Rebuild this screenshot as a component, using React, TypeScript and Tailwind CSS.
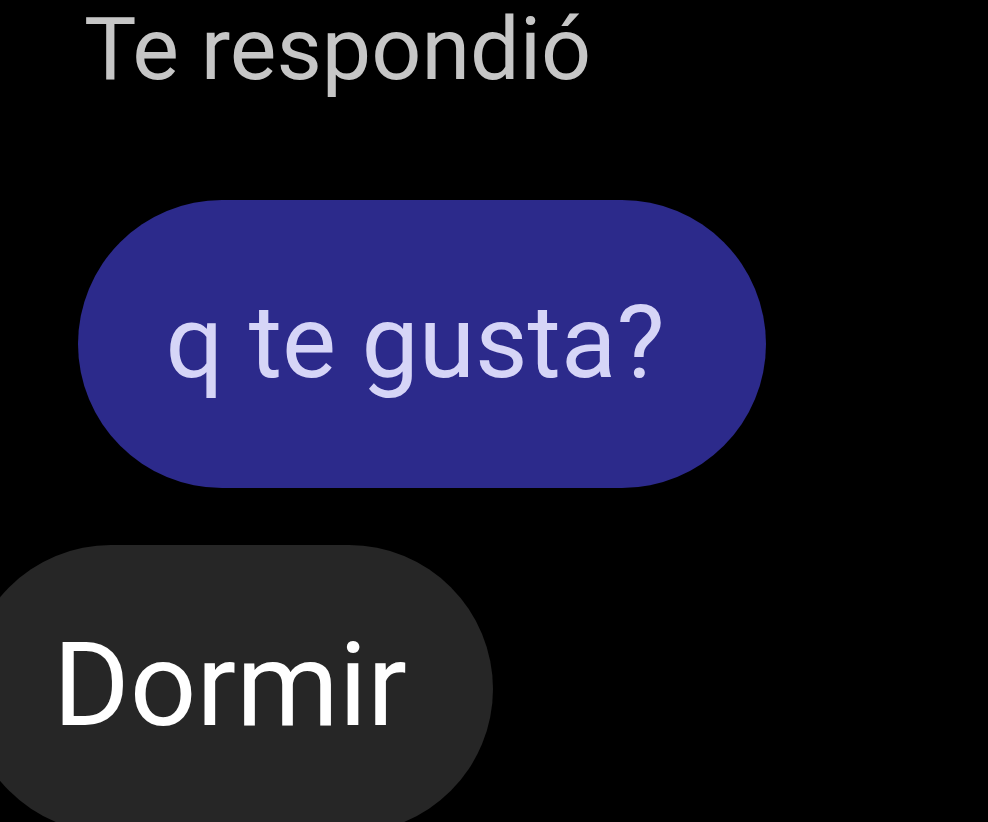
export default function App() {
  return (
    <div
      className="w-[988px] h-[822px] bg-black overflow-hidden flex flex-col"
      style={{ fontFamily: 'Roboto, "Noto Sans", Arial, sans-serif' }}
    >
      <div className="ml-[84px] mt-[5px] text-[88px] leading-none text-[#c6c6c6] whitespace-nowrap">
        Te respondió
      </div>
      <div className="ml-[78px] mt-[107px] w-[688px] h-[288px] shrink-0 rounded-full bg-[#2c2a8b] flex items-center justify-center pr-[14px] pb-[4px]">
        <span className="text-[102px] leading-none text-[#d6d5f7] whitespace-nowrap">q te gusta?</span>
      </div>
      <div className="ml-[-33px] mt-[57px] w-[526px] h-[288px] shrink-0 rounded-full bg-[#262626] flex items-center pl-[86px] pb-[8px]">
        <span className="text-[117px] leading-none text-white whitespace-nowrap">Dormir</span>
      </div>
    </div>
  );
}
